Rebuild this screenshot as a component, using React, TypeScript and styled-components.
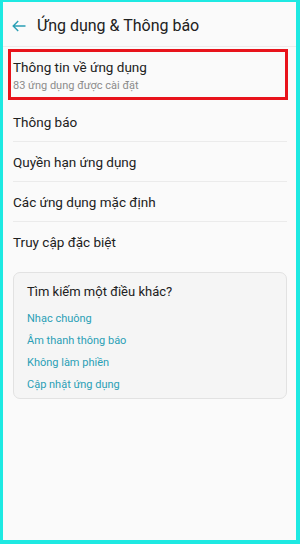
import React from "react";
import styled, { createGlobalStyle } from "styled-components";

const GlobalStyle = createGlobalStyle`
  html, body {
    margin: 0;
    padding: 0;
    background: #fafafa;
  }
  * {
    box-sizing: border-box;
  }
`;

const Frame = styled.div`
  width: 300px;
  height: 544px;
  border-style: solid;
  border-color: #1ee9e2;
  border-width: 2px 4px 4px 3px;
  background: #fafafa;
  font-family: Roboto, "Noto Sans", "Liberation Sans", sans-serif;
  color: #212121;
  overflow: hidden;
`;

const Header = styled.header`
  display: flex;
  align-items: center;
  height: 45px;
  padding: 4px 0 0 9px;
  border-bottom: 1px solid #ececec;
`;

const BackButton = styled.div`
  display: flex;
  align-items: center;
  width: 25px;
  height: 20px;
  color: #2a9fb5;
`;

const Title = styled.h1`
  margin: 0;
  font-size: 16px;
  font-weight: 400;
  line-height: 22px;
`;

const Highlight = styled.div`
  margin: 2px 0 0 5px;
  width: 280px;
  height: 51px;
  border: 3px solid #e8131b;
  padding: 5px 0 0 2px;
  display: flex;
  flex-direction: column;
`;

const ItemTitle = styled.div`
  font-size: 13.5px;
  line-height: 20px;
`;

const ItemSub = styled.div`
  font-size: 11px;
  line-height: 16px;
  color: #8c8c8c;
  margin-top: 1px;
`;

const List = styled.div`
  margin: 2px 9px 0 10px;
`;

interface RowProps {
  last?: boolean;
}

const Row = styled.div<RowProps>`
  height: 40px;
  display: flex;
  align-items: center;
  font-size: 13.5px;
  border-bottom: ${(props) => (props.last ? "none" : "1px solid #ebebeb")};
`;

const Card = styled.div`
  margin: 10px 9px 0 10px;
  height: 127px;
  border: 1px solid #e2e2e2;
  border-radius: 7px;
  background: #f5f5f5;
  padding: 9px 0 0 13px;
`;

const CardTitle = styled.div`
  font-size: 13px;
  line-height: 20px;
  margin-bottom: 6px;
`;

const CardLink = styled.div`
  font-size: 11px;
  line-height: 22px;
  color: #2a9fb5;
`;

const rows = [
  "Thông báo",
  "Quyền hạn ứng dụng",
  "Các ứng dụng mặc định",
  "Truy cập đặc biệt",
];

const links = [
  "Nhạc chuông",
  "Âm thanh thông báo",
  "Không làm phiền",
  "Cập nhật ứng dụng",
];

const App = () => {
  return (
    <>
      <GlobalStyle />
      <Frame>
        <Header>
          <BackButton>
            <svg width="14" height="12" viewBox="0 0 14 12" fill="none">
              <path
                d="M13.5 6H1.2M6.2 1L1.2 6l5 5"
                stroke="currentColor"
                strokeWidth="1.4"
              />
            </svg>
          </BackButton>
          <Title>Ứng dụng &amp; Thông báo</Title>
        </Header>

        <Highlight>
          <ItemTitle>Thông tin về ứng dụng</ItemTitle>
          <ItemSub>83 ứng dụng được cài đặt</ItemSub>
        </Highlight>

        <List>
          {rows.map((row, index) => (
            <Row key={row} last={index === rows.length - 1}>
              {row}
            </Row>
          ))}
        </List>

        <Card>
          <CardTitle>Tìm kiếm một điều khác?</CardTitle>
          {links.map((link) => (
            <CardLink key={link}>{link}</CardLink>
          ))}
        </Card>
      </Frame>
    </>
  );
};

export default App;
